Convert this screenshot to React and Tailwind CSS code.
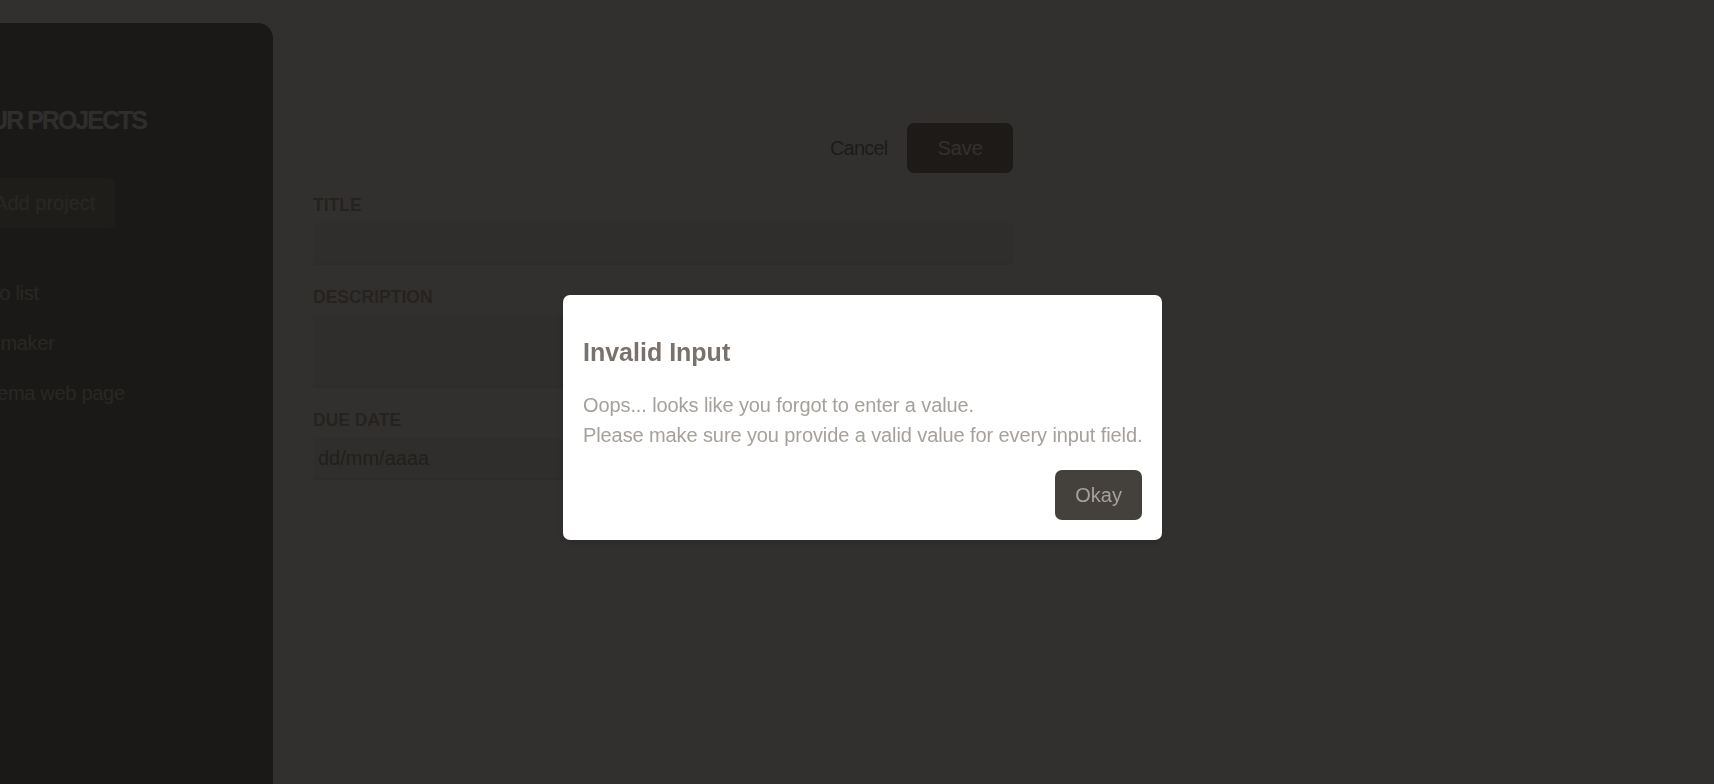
import React from 'react';

const projects = ['Todo list', 'CV maker', 'Cinema web page'];

const Sidebar = () => (
  <aside className="-ml-[82px] w-[355px] shrink-0 h-[800px] px-10 py-20 bg-stone-900 text-stone-50 rounded-tr-[15px]">
    <h2 className="mb-10 text-[25px] leading-[35px] font-bold uppercase text-stone-200 tracking-[-2px]">Your Projects</h2>
    <div>
      <button className="px-5 py-2.5 rounded-[7px] bg-stone-700 text-stone-400">+ Add project</button>
    </div>
    <ul className="mt-10">
      {projects.map((p) => (
        <li key={p}>
          <button className="w-full text-left px-2.5 py-[5px] my-[5px] rounded-[3px] text-stone-400 tracking-[-0.3px]">{p}</button>
        </li>
      ))}
    </ul>
  </aside>
);

const Field = ({ label, children }) => (
  <p className="flex flex-col gap-[5px] my-5">
    <label className="text-[17.5px] leading-[25px] font-bold uppercase text-stone-500">{label}</label>
    {children}
  </p>
);

const inputClasses = 'w-full p-[5px] border-b-[2.5px] rounded-[3px] border-stone-300 bg-stone-200 text-stone-600 outline-none';

const NewProject = () => (
  <div className="w-[700px] mt-20">
    <menu className="flex items-center justify-end gap-5 my-5">
      <li><button className="text-stone-800 tracking-[-0.8px]">Cancel</button></li>
      <li><button className="px-[30px] py-2.5 rounded-[7px] bg-stone-800 text-stone-50">Save</button></li>
    </menu>
    <div>
      <Field label="Title">
        <input type="text" className={inputClasses} />
      </Field>
      <Field label="Description">
        <textarea rows={2} className={`${inputClasses} h-[72.5px] resize-none`} />
      </Field>
      <Field label="Due Date">
        <input type="text" readOnly value="dd/mm/aaaa" className={inputClasses} />
      </Field>
    </div>
  </div>
);

const Modal = () => (
  <>
    {/* backdrop */}
    <div className="fixed inset-0 bg-stone-900/90" />
    <div className="fixed left-[563px] top-[295px] w-[599px] p-5 rounded-[7px] bg-white shadow-md">
      <h2 className="my-5 text-[25px] leading-[35px] font-bold text-stone-500">Invalid Input</h2>
      <p className="my-5 text-stone-400 whitespace-nowrap tracking-[-0.1px]">
        Oops... looks like you forgot to enter a value.
        <br />
        Please make sure you provide a valid value for every input field.
      </p>
      <form className="text-right">
        <button type="button" className="px-5 py-2.5 rounded-[7px] bg-stone-700 text-stone-400">Okay</button>
      </form>
    </div>
  </>
);

export default function App() {
  return (
    <div className="h-[784px] overflow-hidden bg-white text-[20px] leading-[30px] font-['Liberation_Sans',Arial,sans-serif]">
      <main className="pt-[23px] flex gap-10">
        <Sidebar />
        <NewProject />
      </main>
      <Modal />
    </div>
  );
}
